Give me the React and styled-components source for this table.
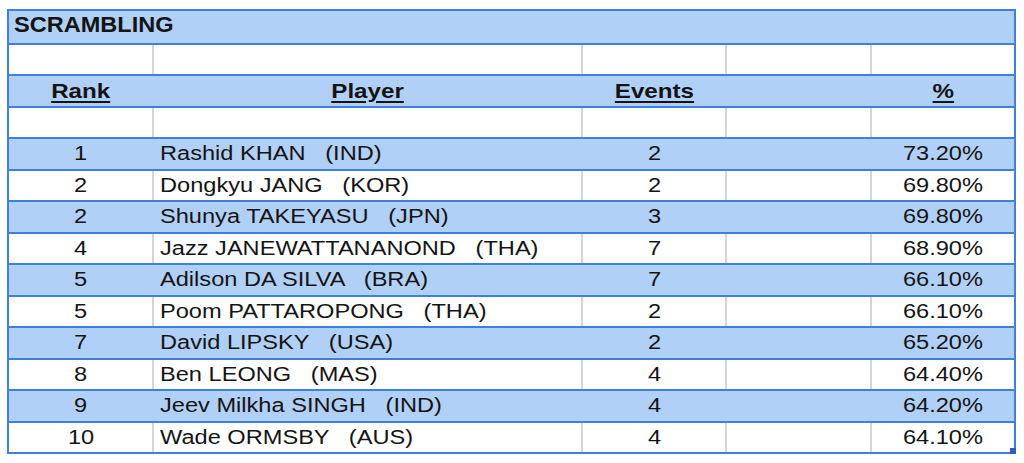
import React from 'react';
import styled, { createGlobalStyle } from 'styled-components';

const colors = {
    fill: '#b1d0f7',
    line: '#3f80dc',
    grid: '#d5d5d5',
    ink: '#141414',
    handle: '#2f5fb8',
};

const players = [
    { rank: 1, name: 'Rashid KHAN   (IND)', events: 2, pct: '73.20%' },
    { rank: 2, name: 'Dongkyu JANG   (KOR)', events: 2, pct: '69.80%' },
    { rank: 2, name: 'Shunya TAKEYASU   (JPN)', events: 3, pct: '69.80%' },
    { rank: 4, name: 'Jazz JANEWATTANANOND   (THA)', events: 7, pct: '68.90%' },
    { rank: 5, name: 'Adilson DA SILVA   (BRA)', events: 7, pct: '66.10%' },
    { rank: 5, name: 'Poom PATTAROPONG   (THA)', events: 2, pct: '66.10%' },
    { rank: 7, name: 'David LIPSKY   (USA)', events: 2, pct: '65.20%' },
    { rank: 8, name: 'Ben LEONG   (MAS)', events: 4, pct: '64.40%' },
    { rank: 9, name: 'Jeev Milkha SINGH   (IND)', events: 4, pct: '64.20%' },
    { rank: 10, name: 'Wade ORMSBY   (AUS)', events: 4, pct: '64.10%' },
];

const GlobalStyle = createGlobalStyle`
    html, body { margin: 0; background: #fff; }
    body { font-family: "Liberation Sans", Arial, sans-serif; color: ${colors.ink}; }
`;

const Blank = ({ shade }) => (
    <Row $shade={shade}>
        <Cell />
        <Cell />
        <Cell />
        <Cell />
        <Cell />
    </Row>
);

const App = () => (
    <Page>
        <GlobalStyle />
        <Sheet>
            <TitleRow>
                <Title>SCRAMBLING</Title>
            </TitleRow>
            <Blank />
            <Row $shade>
                <Cell $align="center"><Head>Rank</Head></Cell>
                <Cell $align="center"><Head>Player</Head></Cell>
                <Cell $align="center"><Head>Events</Head></Cell>
                <Cell />
                <Cell $align="center"><Head>%</Head></Cell>
            </Row>
            <Blank />
            {players.map((p, i) => (
                <Row key={p.name} $shade={i % 2 === 0}>
                    <Cell $align="center"><Text>{p.rank}</Text></Cell>
                    <Cell $align="left"><Text $from="left">{p.name}</Text></Cell>
                    <Cell $align="center"><Text>{p.events}</Text></Cell>
                    <Cell />
                    <Cell $align="center"><Text>{p.pct}</Text></Cell>
                </Row>
            ))}
            <Handle />
        </Sheet>
    </Page>
);

export default App;

const Page = styled.div`
    padding: 9px 0 0 7px;
`;

const Sheet = styled.div`
    position: relative;
    box-sizing: border-box;
    width: 1009px;
    height: 445px;
    border: 2px solid ${colors.line};
    display: grid;
    grid-auto-rows: 1fr;
`;

const TitleRow = styled.div`
    background: ${colors.fill};
    display: flex;
    align-items: center;
    padding: 0 0 3px 5px;
`;

const Title = styled.span`
    display: inline-block;
    font-size: 22px;
    font-weight: 700;
    transform: scaleX(1.07);
    transform-origin: left center;
`;

const Row = styled.div`
    display: grid;
    grid-template-columns: 144px 429px 144px 145px 1fr;
    border-top: 2px solid ${colors.line};
    background: ${p => (p.$shade ? colors.fill : '#fff')};
    & > div + div {
        border-left: 2px solid ${p => (p.$shade ? 'transparent' : colors.grid)};
        margin-left: -1px;
    }
`;

const Cell = styled.div`
    display: flex;
    align-items: center;
    justify-content: ${p => (p.$align === 'left' ? 'flex-start' : 'center')};
    padding-left: ${p => (p.$align === 'left' ? '6px' : '0')};
    overflow: hidden;
`;

const Head = styled.span`
    display: inline-block;
    font-size: 21px;
    font-weight: 700;
    text-decoration: underline;
    text-decoration-thickness: 2px;
    text-underline-offset: 3px;
    transform: scaleX(1.15);
`;

const Text = styled.span`
    display: inline-block;
    font-size: 20px;
    white-space: pre;
    transform: scaleX(1.18);
    transform-origin: ${p => (p.$from === 'left' ? 'left center' : 'center')};
`;

const Handle = styled.div`
    position: absolute;
    right: -2px;
    bottom: -2px;
    width: 6px;
    height: 6px;
    background: ${colors.handle};
`;
